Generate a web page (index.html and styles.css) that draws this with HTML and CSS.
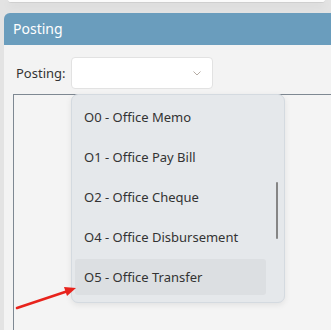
FILE: index.html
```html
<!DOCTYPE html>
<html lang="en">
<head>
  <meta charset="UTF-8" />
  <title>Posting</title>
  <link rel="stylesheet" href="styles.css">
</head>
<body>

<div class="topbar"></div>

<div class="panel">
  <div class="panel-header">Posting</div>
  <div class="panel-body">
    <div class="field">
      <label>Posting:</label>
      <div class="select">
        <svg class="chevron" width="8" height="5" viewBox="0 0 8 5"><path d="M0.5 0.5 L4 4 L7.5 0.5" fill="none" stroke="#b5aca4" stroke-width="1"/></svg>
      </div>
    </div>
    <div class="grid-box"></div>
  </div>
</div>

<!-- open dropdown -->
<div class="dropdown">
  <div class="option">O0 - Office Memo</div>
  <div class="option">O1 - Office Pay Bill</div>
  <div class="option">O2 - Office Cheque</div>
  <div class="option">O4 - Office Disbursement</div>
  <div class="option hover">O5 - Office Transfer</div>
  <div class="scrollbar"></div>
</div>

<svg class="pointer" width="90" height="40" viewBox="0 0 90 40">
  <line x1="17" y1="308" x2="68" y2="291" transform="translate(0,-280)" stroke="#e8231c" stroke-width="2.5" stroke-linecap="round"/>
  <polygon points="76,288 64,287 67,296" transform="translate(0,-280)" fill="#e8231c"/>
</svg>

</body>
</html>
```

FILE: styles.css
```css
body {
  margin: 0;
  height: 330px;
  overflow: hidden;
  background: #e3e3e3;
  font-family: 'Noto Sans', 'Open Sans', sans-serif;
  color: #333;
}
.topbar {
  margin-left: 8px;
  margin-right: 6px;
  height: 2px;
  background: #fbfbfb;
  border-bottom: 1px solid #cfcfcf;
  border-radius: 0 0 4px 4px;
  box-shadow: 0 3px 8px rgba(0,0,0,0.08);
}
.panel {
  margin: 10px 0 0 4px;
}
.panel-header {
  height: 32px;
  line-height: 32px;
  padding-left: 9px;
  background: #6a9dbd;
  color: #fff;
  font-size: 14px;
  border-top-left-radius: 6px;
}
.panel-body {
  background: #f3f3f3;
  height: 285px;
  padding-top: 12px;
  box-sizing: border-box;
  display: flex;
  flex-direction: column;
}
.field {
  display: flex;
  align-items: center;
  padding-left: 12px;
  gap: 5px;
}
.field label {
  font-size: 13px;
  color: #333;
}
.select {
  width: 142px;
  height: 32px;
  box-sizing: border-box;
  background: #fff;
  border: 1px solid #e2e2e2;
  border-radius: 4px;
  display: flex;
  align-items: center;
  justify-content: flex-end;
  padding-right: 11px;
}
.grid-box {
  flex: 1;
  margin: 5px 0 0 9px;
  border-top: 1px solid #7e8892;
  border-left: 1px solid #7e8892;
  background: #f4f4f4;
}
.dropdown {
  position: absolute;
  left: 71px;
  top: 94px;
  width: 214px;
  height: 209px;
  box-sizing: border-box;
  padding: 4px 18px 0 3px;
  background: #e5e8eb;
  border: 1px solid #d4dae0;
  border-radius: 7px;
  box-shadow: 0 2px 6px rgba(0,0,0,0.08);
  display: flex;
  flex-direction: column;
  gap: 4px;
}
.option {
  height: 36px;
  line-height: 36px;
  padding-left: 9px;
  font-size: 13px;
  color: #333;
  border-radius: 3px;
}
.option.hover {
  background: #dcdfe2;
}
.scrollbar {
  position: absolute;
  left: 204px;
  top: 87px;
  width: 2px;
  height: 57px;
  background: #858585;
  border-radius: 1px;
}
.pointer {
  position: absolute;
  left: 0;
  top: 280px;
}
```
